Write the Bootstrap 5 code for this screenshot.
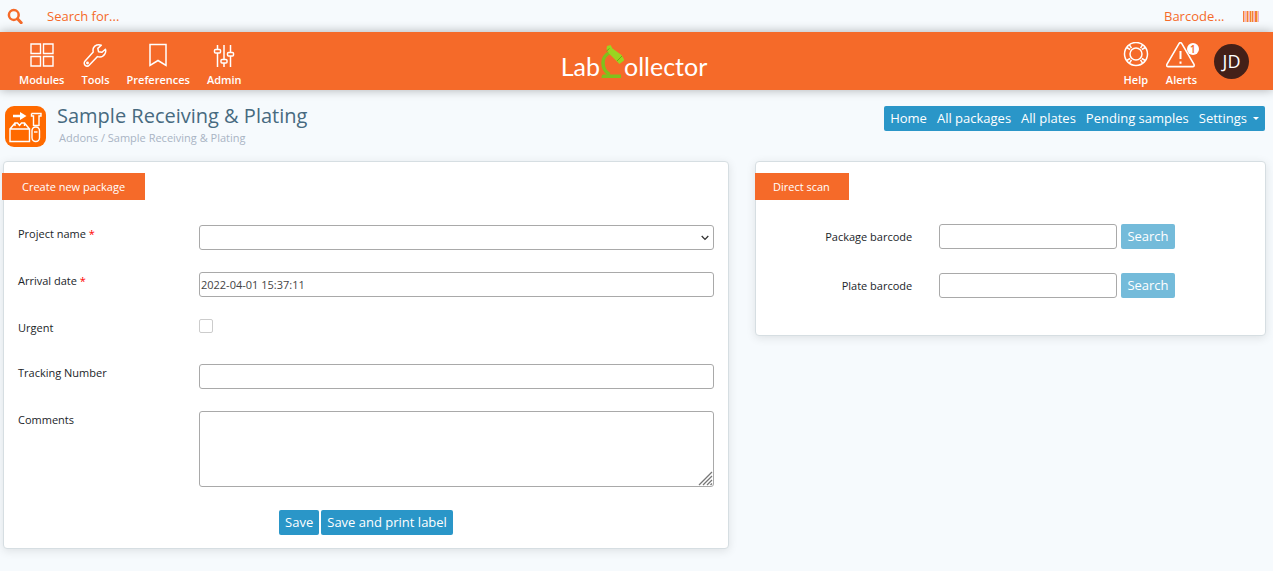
<!DOCTYPE html>
<html lang="en">
<head>
<meta charset="utf-8">
<meta name="viewport" content="width=device-width, initial-scale=1">
<title>LabCollector - Sample Receiving &amp; Plating</title>
<link href="https://cdn.jsdelivr.net/npm/bootstrap@5.3.0/dist/css/bootstrap.min.css" rel="stylesheet">
<style>
:root{--lc-orange:#f56a29;--lc-blue:#2a96c8}
body{font-family:"Open Sans",sans-serif;font-size:11px;line-height:16px;color:#212529;background:#f6fafd}
svg{display:block}
.quickbar{height:32px;padding:0 13px 0 7px}
.quickbar input{border:0;background:transparent;color:var(--lc-orange);font-size:13px;line-height:20px;padding:0;outline:0}
.quickbar input::placeholder{color:var(--lc-orange);opacity:1}
.barcode-field{width:62px}
.mainbar{display:grid;grid-template-columns:1fr auto 1fr;height:58px;padding:0 24px 0 19px;background:var(--lc-orange);box-shadow:0 0 10px rgba(0,0,0,.3);position:relative}
.mainbar a{color:#fff;text-decoration:none;font-weight:600}
.mainbar nav{gap:17px}
.icon-link-box{display:flex;flex-direction:column;align-items:center;padding-top:10px;gap:4px}
.icon-link-box svg{height:26px}
.mainbar .brand{font-family:Lato,sans-serif;font-size:25px;line-height:30px;font-weight:400}
.brand span{padding-top:10px}
.alert-count{position:absolute;top:11px;left:21px;width:12px;height:12px;border-radius:50%;background:#fff;color:var(--lc-orange);font-size:10px;line-height:12px;text-align:center}
.avatar{width:35px;height:35px;border-radius:50%;background:#432018;font-size:18px}
.mainbar .avatar{font-weight:400}
.titlebar{padding:15px 8px 13px 5px}
.titles{margin:-2px 0 0 11px}
.page-title{font-size:20px;line-height:22px;font-weight:400;color:#476a80;margin:0}
.crumbs{color:#a9b4c4;padding:3px 0 0 2px}
.crumbs a{color:inherit;text-decoration:none}
.addon-menu{background:var(--lc-blue);border-radius:2px;padding:0 1px;margin-top:1px}
.addon-menu a{color:#fff;font-size:13px;line-height:25px;padding:0 5px;text-decoration:none;display:flex;align-items:center}
.addon-menu .dropdown-toggle::after{border-width:3px 3px 0;margin-left:6px}
.panels{display:grid;grid-template-columns:726fr 511fr;gap:26px;align-items:start;padding:0 7px 22px 3px}
.panel{background:#fff;border:1px solid #d6dee2;border-radius:4px;box-shadow:0 2px 10px rgba(0,0,0,.1);padding:11px 0 13px}
.panel h2{display:table;margin:0 0 0 -2px;background:var(--lc-orange);color:#fff;font-size:11px;line-height:27px;font-weight:400;padding:0 20px}
.scan-panel h2{margin-left:-1px;padding:0 19px 0 18px}
.scan-panel{padding-bottom:37px}
.package-form{padding:25px 14px 0}
.field-row{display:grid;grid-template-columns:26% 1fr;align-items:start;margin-bottom:22px}
.field-row label{padding-top:1px}
.check-row{height:23px}
.req{color:#f00}
.field{width:100%;height:25px;border:1px solid #a9a9a9;border-radius:3px;background-color:#fff;color:#444;font-size:11px;line-height:16px;padding:1px;display:block}
select.field{appearance:none;background-image:url("data:image/svg+xml,%3Csvg xmlns='http://www.w3.org/2000/svg' width='8' height='6' viewBox='0 0 8 6'%3E%3Cpath d='M.7 1 4 4.4 7.300 1' fill='none' stroke='%23333' stroke-width='1.300'/%3E%3C/svg%3E");background-repeat:no-repeat;background-position:right 4px center}
textarea.field{height:76px}
textarea.field::-webkit-resizer{background:url("data:image/svg+xml,%3Csvg xmlns='http://www.w3.org/2000/svg' width='15' height='15' viewBox='0 0 15 15'%3E%3Cpath d='M1 14 14 1M5 14l9-9M9 14l5-5M12.500 14l1.500-1.500' stroke='%23777' stroke-width='1.300'/%3E%3C/svg%3E") no-repeat right bottom}
.tick{appearance:none;width:14px;height:14px;border:1px solid #ccc;border-radius:2px;background:#fff;margin:0}
.tick:checked{background:var(--lc-blue)}
.act{border:0;border-radius:2px;background:var(--lc-blue);color:#fff;font-size:13px;line-height:25px;padding:0 6px}
.buttons{gap:2px;padding-top:1px}
.act-soft{background:#74bbda}
.scan-row{display:grid;grid-template-columns:36% 35% 1fr;align-items:center;margin-bottom:24px}
.scan-row label{text-align:right;padding-right:27px}
.scan-row .act{margin-left:4px;justify-self:start}
</style>
</head>
<body>
<div class="quickbar d-flex align-items-center justify-content-between">
  <form class="d-flex align-items-center flex-grow-1" role="search">
    <svg width="16" height="16" viewBox="0 0 16 16" fill="none" stroke="#f56a29" aria-hidden="true"><circle cx="6.800" cy="7" r="4.900" stroke-width="2.500"/><path d="m10.500 10.800 3.700 3.900" stroke-width="3" stroke-linecap="round"/></svg>
    <input class="flex-grow-1 ms-4" type="text" placeholder="Search for..." aria-label="Search">
  </form>
  <div class="d-flex align-items-center">
    <input class="barcode-field" type="text" placeholder="Barcode..." aria-label="Barcode">
    <svg class="ms-3" width="18" height="11" viewBox="0 0 18 11" aria-hidden="true"><path fill="#fbc693" d="M1 0h16v11H1z"/><path d="M1.500 0v11M5.500 0v11M10.500 0v11M13.500 0v11" stroke="#f5783f"/><path d="M3.500 0v11M7.500 0v11M12.500 0v11M16.500 0v11" stroke="#f0b0d0"/><path d="M8.500 0v11M14.500 0v11" stroke="#f0872a"/></svg>
  </div>
</div>

<header class="mainbar">
  <nav class="d-flex" aria-label="Main">
    <a class="icon-link-box" href="#"><svg width="26" height="26" viewBox="0 0 26 26" fill="none" stroke="#fff" stroke-width="1.400"><path d="M2 2h9.500v9.500H2zM14.500 2H24v9.500h-9.500zM2 14.500h9.500V24H2zM14.500 14.500H24V24h-9.500z"/></svg>Modules</a>
    <a class="icon-link-box" href="#"><svg width="26" height="26" viewBox="0 0 26 26" fill="none" stroke="#fff" stroke-width="1.500" stroke-linejoin="round"><path d="M19.300 3.200c-3-1.200-6.500-.2-7.800 2.700-.8 1.700-.5 3.100-.3 4.200L3.100 19c-1.300 1.500-1.100 3.300.1 4.300 1.300 1.100 3 .9 4.200-.4l8.100-8.300c2.800.8 5.900-.1 7.400-2.700.9-1.500 1-3.300.5-4.700L20 10.300l-3.500-.6-.7-3.300z"/><circle cx="5.500" cy="21" r=".7"/></svg>Tools</a>
    <a class="icon-link-box" href="#"><svg width="26" height="26" viewBox="0 0 26 26" fill="none" stroke="#fff" stroke-width="1.500"><path d="M5 2.500h16v21l-8-5-8 5z"/></svg>Preferences</a>
    <a class="icon-link-box" href="#"><svg width="26" height="26" viewBox="0 0 26 26" fill="none" stroke="#fff" stroke-width="1.500"><path d="M6.500 3v4.500M6.500 11v14M13 3v14.500M13 21v4M19.500 3v7.500M19.500 14v11"/><rect x="3.500" y="7.500" width="6" height="3.500" rx="1"/><rect x="10" y="17.500" width="6" height="3.500" rx="1"/><rect x="16.500" y="10.500" width="6" height="3.500" rx="1"/></svg>Admin</a>
  </nav>
  <a class="brand d-flex align-items-center" href="#"><span>Lab</span><svg width="24" height="36" viewBox="0 0 24 36" aria-hidden="true"><path d="M10 9.500C5.500 11.500 3 15.500 3 20c0 5 2.500 9 6.500 11.500" fill="none" stroke="#7fc11c" stroke-width="3.500"/><path d="M3.500 31.500h17.500V35H1.500c0-2 .5-3.500 2-3.500z" fill="#7fc11c"/><path d="m7 3 3.500-1 2 3.500 9 6.500 3 5-5 4L9 10.500 6.500 6z" fill="#9ad520"/><path d="m9.500 5.500-3 2.500M22 13l-5 5" stroke="#6eac14" stroke-width="1"/></svg><span>ollector</span></a>
  <nav class="d-flex justify-content-end" aria-label="User">
    <a class="icon-link-box" href="#"><svg width="26" height="26" viewBox="0 0 26 26" fill="none" stroke="#fff" stroke-width="1.500"><circle cx="13" cy="12" r="11.500"/><circle cx="13" cy="12" r="6"/><path d="M7.200 7.500 3.600 5.500M8.500 6.200 6.300 2.600M17.500 6.200l2.200-3.600M18.800 7.500l3.600-2M7.200 16.500l-3.600 2M8.500 17.800l-2.200 3.600M17.500 17.800l2.200 3.600M18.800 16.500l3.600 2"/></svg>Help</a>
    <a class="icon-link-box position-relative" href="#"><svg width="30" height="26" viewBox="0 0 30 26" fill="none" stroke="#fff" stroke-width="1.600" stroke-linejoin="round"><path d="M15.500 1.200q-1.200-1.200-2.200 0L.9 22.400q-.7 2.200 1.300 2.200h24.600q1.800 0 1.200-2.200z"/><path d="M14.500 9v8M14.500 19.500v2.200" stroke-width="2"/></svg>Alerts<span class="alert-count">1</span></a>
    <a class="avatar d-flex align-items-center justify-content-center align-self-center" href="#">JD</a>
  </nav>
</header>

<main>
  <div class="titlebar d-flex align-items-start justify-content-between">
    <div class="d-flex align-items-center">
      <svg width="41" height="43" viewBox="0 -1 41 43" aria-hidden="true"><rect width="41" height="41" rx="9" fill="#ff6a00"/><g fill="none" stroke="#fff" stroke-width="1.400"><path d="M5 23h19.500v12.500H5zM5 23l5-6M19.500 17l5 6M10 20v-3h2.500l2 2.500 2-2.500h3v3M26.500 7.500H36v2.500h-2v10M26.500 7.500v2.500h2v10M28.500 19.500h5.500"/><rect x="27" y="21" width="7.500" height="14.500" rx="3.700"/><path d="M29 26h3.500"/></g><path d="M8 8.800h7V6l6.500 4-6.500 4v-2.800H8z" fill="#fff"/></svg>
      <div class="titles">
        <h1 class="page-title">Sample Receiving &amp; Plating</h1>
        <div class="crumbs"><a href="#">Addons</a> / <a href="#">Sample Receiving &amp; Plating</a></div>
      </div>
    </div>
    <nav class="addon-menu d-flex" aria-label="Addon">
      <a href="#">Home</a><a href="#">All packages</a><a href="#">All plates</a><a href="#">Pending samples</a><a class="dropdown-toggle" href="#">Settings</a>
    </nav>
  </div>

  <div class="panels">
    <section class="panel">
      <h2>Create new package</h2>
      <form class="package-form">
        <div class="field-row"><label for="project">Project name <span class="req">*</span></label><select class="field" id="project"><option></option></select></div>
        <div class="field-row"><label for="arrival">Arrival date <span class="req">*</span></label><input class="field" id="arrival" type="text" value="2022-04-01 15:37:11"></div>
        <div class="field-row check-row"><label for="urgent">Urgent</label><input class="tick" id="urgent" type="checkbox"></div>
        <div class="field-row"><label for="tracking">Tracking Number</label><input class="field" id="tracking" type="text"></div>
        <div class="field-row"><label for="comments">Comments</label><textarea class="field" id="comments"></textarea></div>
        <div class="d-flex justify-content-center buttons"><button class="act" type="button">Save</button><button class="act" type="button">Save and print label</button></div>
      </form>
    </section>
    <section class="panel scan-panel">
      <h2>Direct scan</h2>
      <form class="pt-4">
        <div class="scan-row"><label for="pkg">Package barcode</label><input class="field" id="pkg" type="text"><button class="act act-soft" type="button">Search</button></div>
        <div class="scan-row mb-0"><label for="plate">Plate barcode</label><input class="field" id="plate" type="text"><button class="act act-soft" type="button">Search</button></div>
      </form>
    </section>
  </div>
</main>
<script src="https://cdn.jsdelivr.net/npm/bootstrap@5.3.0/dist/js/bootstrap.bundle.min.js"></script>
</body>
</html>
